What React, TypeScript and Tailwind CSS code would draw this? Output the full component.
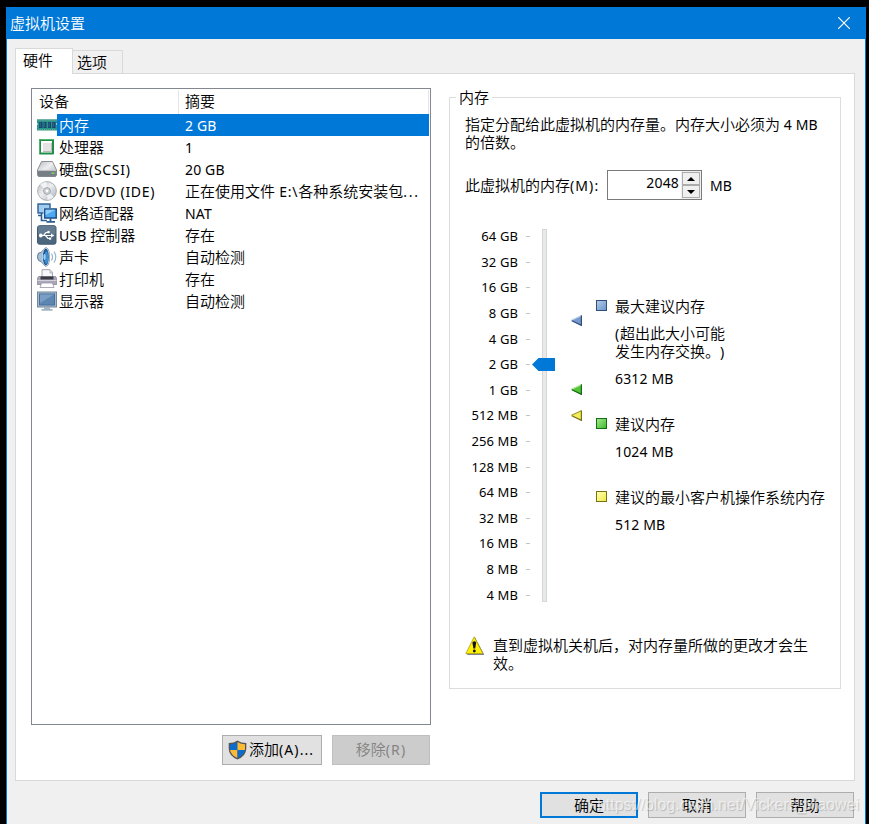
import { useState } from "react";
import type { ReactNode } from "react";

const devices = [
  { id: "memory", name: "内存", summary: "2 GB" },
  { id: "cpu", name: "处理器", summary: "1" },
  { id: "disk", name: "硬盘(SCSI)", summary: "20 GB" },
  { id: "cd", name: "CD/DVD (IDE)", summary: "正在使用文件 E:\\各种系统安装包..." },
  { id: "net", name: "网络适配器", summary: "NAT" },
  { id: "usb", name: "USB 控制器", summary: "存在" },
  { id: "sound", name: "声卡", summary: "自动检测" },
  { id: "printer", name: "打印机", summary: "存在" },
  { id: "display", name: "显示器", summary: "自动检测" },
];

const scale = [
  "64 GB", "32 GB", "16 GB", "8 GB", "4 GB", "2 GB", "1 GB", "512 MB",
  "256 MB", "128 MB", "64 MB", "32 MB", "16 MB", "8 MB", "4 MB",
];

// Latin runs are set one pixel smaller than the Chinese text around them,
// punctuation gets a little more room
function Text({ children }: { children: string }) {
  const parts = children.split(/([\x20-\x7e]+)/).filter(Boolean);
  const tracking = (part: string) => {
    if (part.startsWith("...")) return "tracking-[1.8px]";
    if (/^\([A-Z]\)/.test(part)) return "tracking-[1.1px]";
    if (/[():\\]/.test(part)) return "tracking-[0.7px]";
    return "tracking-[0.15px]";
  };
  return (
    <>
      {parts.map((part, i) =>
        /^[\x20-\x7e]/.test(part) ? (
          <span key={i} className={`text-[14px] leading-[0] font-normal whitespace-pre ${tracking(part)}`}>{part}</span>
        ) : (
          part
        )
      )}
    </>
  );
}

function DeviceIcon({ id }: { id: string }) {
  const shapes: Record<string, ReactNode> = {
    memory: (
      <>
        <path d="M0 4.500H20V8L19 9L20 10V15.500H0V10L1 9L0 8Z" fill="#2a958c" />
        <path d="M0 4.500H20V6H0Z" fill="#4a9b8e" />
        <path d="M2 7H5.500V13H2ZM6.500 7H9.500V13H6.500ZM11 7H14V13H11ZM15 7H18.500V13H15Z" fill="#17466f" />
        <path d="M2.500 7.500H4V12H2.500ZM7 7.500H8.300V12H7ZM11.500 7.500H12.800V12H11.500ZM15.500 7.500H17V12H15.500Z" fill="#2c6488" />
        <path d="M1 15H19" stroke="#a8c792" strokeWidth="1" strokeDasharray="1 1" />
      </>
    ),
    cpu: (
      <>
        <rect x="2" y="2" width="15" height="15.500" rx="1" fill="#208d48" />
        <path d="M2.500 16.500V2.500H16.500" fill="none" stroke="#53b36c" />
        <rect x="4" y="4" width="11" height="11.500" fill="#fff" />
        <rect x="6" y="6" width="8" height="8" fill="#e6e3e5" />
        <path d="M6 14.500H14.500V6" fill="none" stroke="#b7bbb8" />
      </>
    ),
    disk: (
      <>
        <path d="M4.500 2.500H15.500L19.500 11V16L18.500 17.500H1.500L0.500 16V11Z" fill="url(#metal)" stroke="#767b81" strokeWidth=".8" />
        <path d="M.5 11H19.500V16L18.500 17.500H1.500L.5 16Z" fill="#777e86" />
        <path d="M1 11.300H19" stroke="#d2d6da" />
        <rect x="14.500" y="13.500" width="3" height="1.300" fill="#70e455" />
      </>
    ),
    cd: (
      <>
        <circle cx="10" cy="10" r="9.400" fill="url(#metal)" stroke="#a4a8ac" strokeWidth=".9" />
        <path d="M10 10L3 3.500Q6 1 9.500 .8ZM10 10L17 16Q14 19 10.500 19.200Z" fill="#fff" opacity=".7" />
        <circle cx="10" cy="10" r="3.500" fill="#c6cbcf" stroke="#9ba3aa" strokeWidth=".8" />
        <circle cx="10" cy="10" r="1.400" fill="#fff" />
      </>
    ),
    net: (
      <>
        <rect x="1" y="1" width="12" height="9" fill="#9fcdf0" stroke="#2b5d93" strokeWidth="1.400" />
        <path d="M4.500 10V17.500H10M1 12.500H5" fill="none" stroke="#2b5d93" strokeWidth="1.600" />
        <rect x="6.500" y="5" width="13.500" height="11.500" fill="#e4f0fa" />
        <rect x="7.700" y="6" width="11.500" height="9" fill="#4daaf2" stroke="#1f4f88" strokeWidth="1.500" />
        <path d="M8.500 6.800H18.500L8.500 12Z" fill="#8fcefa" />
        <path d="M13.500 15.500V18.500M9.500 18.800H18" stroke="#2b5d93" strokeWidth="1.800" />
      </>
    ),
    usb: (
      <>
        <rect x=".5" y=".7" width="18.500" height="18.500" rx="2" fill="#4c667d" stroke="#40586e" />
        <path d="M1 2Q1 1 2 1H17.500Q18.500 1 18.500 2V9H1Z" fill="#7b92a5" opacity=".5" />
        <path d="M4 10.500H15M6.500 10.500L9 7.500H11M8.500 10.500L11 13.500H13" fill="none" stroke="#fff" strokeWidth="1.200" />
        <circle cx="3.800" cy="10.500" r="1.900" fill="#fff" />
        <path d="M14 8.500L17.500 10.500L14 12.500Z" fill="#fff" />
        <circle cx="11.500" cy="7" r="1.300" fill="#fff" />
        <rect x="12" y="12.500" width="2.200" height="2.200" fill="#fff" />
      </>
    ),
    sound: (
      <>
        <path d="M1.500 6Q-.8 10 1.500 13.500L4 14.500L8.500 19.300Q12.500 19 12.500 10Q12.500 1 8.500 .7L4 5.500Z" fill="#a5bfd4" stroke="#59748e" strokeWidth=".9" />
        <ellipse cx="8.800" cy="10" rx="3.400" ry="8.800" fill="#1d5792" stroke="#d4e3ef" strokeWidth=".8" />
        <ellipse cx="9.300" cy="10.500" rx="2" ry="6.500" fill="#3f8fd0" />
        <ellipse cx="7.500" cy="10" rx="1.200" ry="3" fill="#9fd2f4" />
        <path d="M14.500 6.500Q16.500 10 14.500 13.500M17 4.500Q20.500 10 17 15.500" fill="none" stroke="#98b3cc" strokeWidth="1.200" />
      </>
    ),
    printer: (
      <>
        <path d="M5 .7H13L15.500 3.200V9H5Z" fill="#f6f6fb" stroke="#9a9aa6" strokeWidth=".9" />
        <path d="M13 1V4H16" fill="#ddd" stroke="#a4a4ad" strokeWidth=".7" />
        <path d="M1.500 7.500H18.500L19.700 9.500V15.500H.3V9.500Z" fill="#aaa7b9" stroke="#817e91" strokeWidth=".7" />
        <path d="M3.500 7.500H16.500V10.500H3.500Z" fill="#3b3b46" />
        <path d="M.5 11.500H19.500" stroke="#d3d1de" />
        <path d="M4.500 14H15.500L17 18.500H3Z" fill="#fff" stroke="#9796a3" strokeWidth=".8" />
      </>
    ),
    display: (
      <>
        <rect x=".5" y="1" width="19" height="15" fill="#a9bacb" stroke="#73889d" />
        <rect x="2.500" y="3" width="15" height="11" fill="#5d86b3" stroke="#496f99" />
        <path d="M3 3.500H17L3 12Z" fill="#7b9fc4" />
        <path d="M7 16H13V18H15.500V19.700H4.500V18H7Z" fill="#a3b4c5" />
      </>
    ),
  };
  return (
    <svg className="h-5 w-5 shrink-0" viewBox="0 0 20 20">
      <defs>
        <linearGradient id="metal" x1="0" y1="0" x2="1" y2="1">
          <stop offset="0" stopColor="#b4b8bd" />
          <stop offset=".45" stopColor="#eeeff1" />
          <stop offset="1" stopColor="#a9aeb3" />
        </linearGradient>
      </defs>
      {shapes[id]}
    </svg>
  );
}

function Marker({ light, fill, dark }: { light: string; fill: string; dark: string }) {
  return (
    <svg className="block h-[11px] w-[11px]" viewBox="0 0 11 11">
      <path d="M0 5.500L11 0V11Z" fill={fill} />
      <path d="M.5 5.300L10.300 .7" stroke={light} strokeWidth="1.200" />
      <path d="M10.400 .5V10.400L.8 5.800" fill="none" stroke={dark} strokeWidth="1.200" />
    </svg>
  );
}

function Shield() {
  return (
    <svg className="h-5 w-[19px] shrink-0" viewBox="0 0 19 20">
      <path d="M9.500 .5Q13 3 18.300 3V9Q18 16 9.500 19.500Q1 16 .7 9V3Q6 3 9.500 .5Z" fill="#52565b" />
      <path d="M9.500 2V10H2V4.200Q6 4.200 9.500 2Z" fill="#0c6bcb" />
      <path d="M9.500 2Q13 4.200 17 4.200V10H9.500Z" fill="#fdbb35" />
      <path d="M2 10H9.500V18Q3 15 2 10Z" fill="#fdbb35" />
      <path d="M9.500 10H17Q16 15 9.500 18Z" fill="#0c6bcb" />
    </svg>
  );
}

export default function App() {
  const [selected, setSelected] = useState("memory");

  return (
    <div className="relative h-[824px] w-[869px] overflow-hidden bg-black pt-[7px] pl-[6px] font-['Noto_Sans','Noto_Sans_CJK_SC',sans-serif] text-[15px] leading-[18px] font-[350] text-black [text-spacing-trim:space-all]">
      <div className="flex h-[817px] w-[860px] flex-col border-x border-[#0078d7] bg-[#f0f0f0]">
        <div className="flex h-8 shrink-0 items-center justify-between bg-[#0078d7] pr-[15px] pl-[3px] text-white">
          <span>虚拟机设置</span>
          <svg className="h-3 w-3" viewBox="0 0 12 12">
            <path d="M0 0L12 12M12 0L0 12" stroke="#fff" strokeWidth="1.200" />
          </svg>
        </div>

        <div className="flex h-[35px] shrink-0 items-end pl-2">
          <div className="z-10 h-[26px] w-[58px] border border-b-0 border-[#d9d9d9] bg-white pt-[2px] pl-[7px]">硬件</div>
          <div className="-ml-px h-6 w-[51px] border border-[#d9d9d9] pt-[2px] pl-1">选项</div>
        </div>

        <div className="-mt-px ml-2 flex h-[708px] w-[840px] shrink-0 border border-[#d9d9d9] bg-white pt-[14px] pl-[15px]">
          <div className="w-[400px]">
            <div className="h-[637px] border border-[#828790] p-px">
              <div className="flex h-6 items-center">
                <div className="h-6 w-[146px] border-r border-[#e5e5e5] pt-[2px] pl-[6px]">设备</div>
                <div className="h-6 flex-1 border-r border-[#e5e5e5] pt-[2px] pl-[6px]">摘要</div>
              </div>
              {devices.map((device) => (
                <div key={device.id} onClick={() => setSelected(device.id)} className="flex h-[22px] items-center pl-1">
                  <DeviceIcon id={device.id} />
                  <div className={`flex h-[22px] flex-1 items-center ${selected === device.id ? "bg-[#0078d7] text-white" : ""}`}>
                    <span className="w-32 pl-[2px] whitespace-nowrap"><Text>{device.name}</Text></span>
                    <span className="whitespace-nowrap"><Text>{device.summary}</Text></span>
                  </div>
                </div>
              ))}
            </div>
            <div className="mt-[10px] flex gap-[10px] pl-[191px]">
              <button className="flex h-[30px] w-[100px] shrink-0 items-center border border-[#adadad] bg-[#e1e1e1] pl-[5px] whitespace-nowrap">
                <Shield />
                <span className="pb-[2px] pl-[2px]"><Text>添加(A)...</Text></span>
              </button>
              <button disabled className="h-[30px] w-[98px] shrink-0 border border-[#bfbfbf] bg-[#cccccc] pb-[3px] text-[#838383]">
                <Text>移除(R)</Text>
              </button>
            </div>
          </div>

          <fieldset className="ml-[18px] h-[601px] w-[392px] border border-[#dcdcdc] pl-[15px]">
            <legend className="-ml-[9px] px-[3px] leading-[18px]">内存</legend>
            <div className="mt-[9px] w-[370px]"><Text>指定分配给此虚拟机的内存量。内存大小必须为 4 MB</Text><br />的倍数。</div>

            <div className="mt-[19px] flex h-[30px] items-center">
              <div className="w-[142px]"><Text>此虚拟机的内存(M):</Text></div>
              <div className="flex h-[30px] w-[95px] border border-[#7a7a7a] bg-white">
                <div className="flex-1 pt-[2px] pr-[2px] text-right"><Text>2048</Text></div>
                <div className="flex w-5 flex-col bg-[#f0f0f0] p-px">
                  {["M4 0L8 4H0Z", "M0 0H8L4 4Z"].map((d) => (
                    <button key={d} className="flex flex-1 items-center justify-center border border-[#acacac] bg-[#f0f0f0]">
                      <svg className="h-1 w-2" viewBox="0 0 8 4"><path d={d} /></svg>
                    </button>
                  ))}
                </div>
              </div>
              <span className="ml-2"><Text>MB</Text></span>
            </div>

            <div className="mt-[24px] flex h-[384px]">
              <div className="flex w-[65px] flex-col text-[13px] font-normal">
                {scale.map((label) => (
                  <div key={label} className="flex flex-1 items-center justify-end gap-2">
                    <span className="pb-px tracking-[0.1px]">{label}</span>
                    <span className="h-px w-1 bg-[#c4c4c4]" />
                  </div>
                ))}
              </div>
              <div className="relative mt-[5px] ml-3 h-[373px] w-[5px] border border-[#d6d6d6] bg-[#e7eaea]">
                <svg className="absolute top-[128px] -left-[11px] h-[13px] w-[23px]" viewBox="0 0 23 13">
                  <path d="M0 6.500L6.500 0H23V13H6.500Z" fill="#0078d7" />
                </svg>
              </div>
              <div className="ml-6 w-[11px] pt-[91px]">
                <Marker light="#b8d0ec" fill="#7799cd" dark="#324f7c" />
                <div className="mt-[58px]"><Marker light="#b8e8a0" fill="#52c435" dark="#18691b" /></div>
                <div className="mt-[15px]"><Marker light="#a29a38" fill="#f4ed58" dark="#77701a" /></div>
              </div>
              <div className="ml-[14px] pt-[73px] whitespace-nowrap">
                <div className="flex items-center gap-2">
                  <span className="mb-px h-[11px] w-[11px] border border-[#2d4f7c] bg-linear-to-br from-[#b3cbe8] to-[#6e96ca]" />
                  <span>最大建议内存</span>
                </div>
                <div className="mt-[9px] pl-[19px]"><Text>(超出此大小可能</Text><br /><Text>发生内存交换。)</Text></div>
                <div className="mt-[9px] pl-[19px]"><Text>6312 MB</Text></div>
                <div className="mt-[28px] flex items-center gap-2">
                  <span className="mb-px h-[11px] w-[11px] border border-[#146e17] bg-linear-to-br from-[#a0e888] to-[#3cbc28]" />
                  <span>建议内存</span>
                </div>
                <div className="mt-[9px] pl-[19px]"><Text>1024 MB</Text></div>
                <div className="mt-[28px] flex items-center gap-2">
                  <span className="mb-px h-[11px] w-[11px] border border-[#777017] bg-linear-to-br from-[#ffffb0] to-[#f0ea38]" />
                  <span>建议的最小客户机操作系统内存</span>
                </div>
                <div className="mt-[9px] pl-[19px]"><Text>512 MB</Text></div>
              </div>
            </div>

            <div className="mt-[28px] flex items-start gap-2">
              <svg className="h-5 w-5 shrink-0" viewBox="0 0 20 20">
                <path d="M10 1.500L19.200 18.700H2Z" fill="#555577" />
                <path d="M9.200 .8L18 17.700H.8Z" fill="#fff100" stroke="#a99d22" strokeWidth=".8" strokeLinejoin="round" />
                <path d="M7.400 6.500Q9.300 4.200 11.200 6.500L10.200 12.500H8.400Z" fill="#111" />
                <circle cx="9.300" cy="15" r="1.400" fill="#111" />
              </svg>
              <div>直到虚拟机关机后，对内存量所做的更改才会生<br />效。</div>
            </div>
          </fieldset>
        </div>

        <div className="mt-[11px] flex justify-end gap-[10px] pr-[11px]">
          <button className="h-[26px] w-[98px] border-2 border-[#0078d7] bg-[#e1e1e1]">确定</button>
          <button className="h-[26px] w-[98px] border border-[#adadad] bg-[#e1e1e1]">取消</button>
          <button className="h-[26px] w-[98px] border border-[#adadad] bg-[#e1e1e1]">帮助</button>
        </div>
      </div>
      <div className="pointer-events-none absolute right-[10px] bottom-[10px] font-['Liberation_Sans',sans-serif] text-[16px] font-normal whitespace-nowrap text-white/60 [text-shadow:1px_1px_1px_rgba(0,0,0,0.18)]">
        https://blog.csdn.net/Vickers_xiaowei
      </div>
    </div>
  );
}
